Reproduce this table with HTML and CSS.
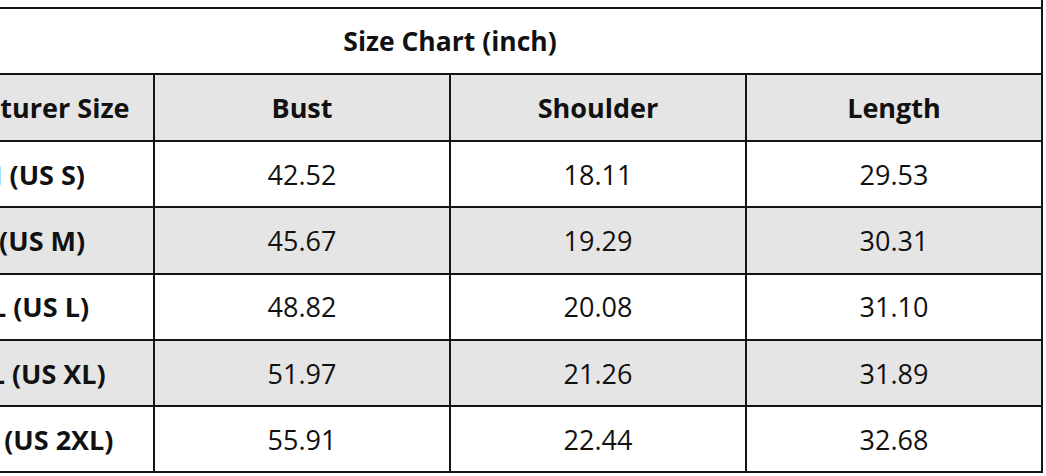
FILE: index.html
```html
<!DOCTYPE html>
<html>
<head>
<meta charset="utf-8">
<link rel="stylesheet" href="styles.css">
</head>
<body>
<div class="frame">
<table class="chart">
  <colgroup>
    <col class="c">
    <col class="c">
    <col class="c">
    <col class="c">
  </colgroup>
  <tr class="prev"><td colspan="4"></td></tr>
  <tr class="title"><td colspan="4">Size Chart (inch)</td></tr>
  <tr class="head">
    <th class="size-head">Manufacturer Size</th>
    <th>Bust</th>
    <th>Shoulder</th>
    <th>Length</th>
  </tr>
  <tr class="row">
    <td class="size">M (US S)</td><td>42.52</td><td>18.11</td><td>29.53</td>
  </tr>
  <tr class="row alt">
    <td class="size">L (US M)</td><td>45.67</td><td>19.29</td><td>30.31</td>
  </tr>
  <tr class="row">
    <td class="size">XL (US L)</td><td>48.82</td><td>20.08</td><td>31.10</td>
  </tr>
  <tr class="row alt">
    <td class="size">2XL (US XL)</td><td>51.97</td><td>21.26</td><td>31.89</td>
  </tr>
  <tr class="row">
    <td class="size">3XL (US 2XL)</td><td>55.91</td><td>22.44</td><td>32.68</td>
  </tr>
</table>
</div>
</body>
</html>
```
FILE: styles.css
```css
html, body {
  margin: 0;
  padding: 0;
  background: #ffffff;
}
body {
  width: 1046px;
  height: 476px;
  overflow: hidden;
  font-family: "Open Sans", "Liberation Sans", sans-serif;
  color: #111111;
}
.frame {
  width: 1046px;
  height: 476px;
  overflow: hidden;
}
.chart {
  border-collapse: collapse;
  table-layout: fixed;
  width: 1184px;
  margin-left: -143px;
  margin-top: -21px;
}
.c {
  width: 296px;
}
.chart td, .chart th {
  border: 2px solid #141414;
  padding: 0;
  text-align: center;
  vertical-align: middle;
  white-space: nowrap;
  overflow: hidden;
}
.prev td {
  height: 26px;
}
.title td {
  height: 64px;
  font-size: 26.5px;
  font-weight: 700;
  background: #ffffff;
}
.head th {
  height: 65px;
  font-size: 27px;
  font-weight: 700;
  background: #e6e5e6;
}
.row td {
  height: 64.3px;
  font-size: 27px;
  font-weight: 400;
  background: #ffffff;
}
.row.alt td {
  background: #e6e5e6;
}
.row td.size {
  font-weight: 700;
  padding-left: 50px;
}
```
